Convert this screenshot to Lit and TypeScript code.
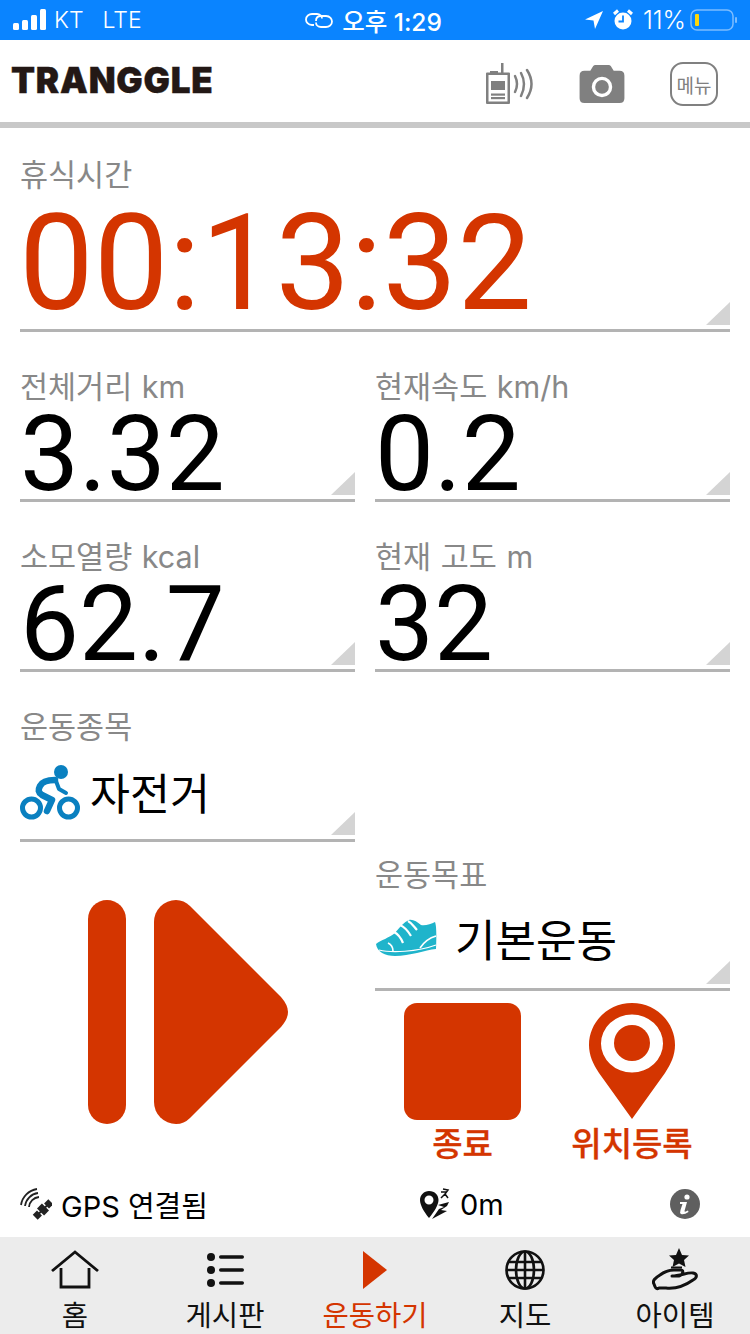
import { LitElement, html, css } from "lit";
import { customElement } from "lit/decorators.js";

const ORANGE = "#d43500";

const cyclist = html`<svg viewBox="0 0 60 56" width="60" height="56">
  <circle cx="41" cy="8" r="7" fill="#0a80c0"/>
  <path d="M35 16 C28 16 22 18 20 22 C18 26 18 28 22 31 L32 36 L27 47" fill="none" stroke="#0a80c0" stroke-width="6.500" stroke-linecap="round" stroke-linejoin="round"/>
  <path d="M36 17 L39 25 L46 29" fill="none" stroke="#0a80c0" stroke-width="4" stroke-linecap="round" stroke-linejoin="round"/>
  <circle cx="11.500" cy="44" r="9" fill="none" stroke="#0a80c0" stroke-width="5"/>
  <circle cx="48.500" cy="44" r="9" fill="none" stroke="#0a80c0" stroke-width="5"/>
</svg>`;

const shoe = html`<svg viewBox="0 0 62 38" width="62" height="38">
  <path d="M1 25 C6 21 14 19 20 14 C25 8 29 3 34 1 C38 0 42 3 46 6 C50 7 56 5 60 3 Q62 8 61 30 C50 31 35 37 20 37 C10 37 2 33 1 25Z" fill="#1fb4cb"/>
  <path d="M19 13 C23 15 26 19 28 24 M25 6 C30 8 33 12 36 17 M33 2 C37 4 39 8 42 11" stroke="#fff" stroke-width="2.200" fill="none"/>
  <path d="M13 24 C17 26 18 29 18 32 M45 29 C49 23 54 19 61 17" stroke="#fff" stroke-width="1.600" fill="none"/>
  <path d="M4 31 C16 34 42 33 61 26" stroke="#fff" stroke-width="1.200" fill="none"/>
</svg>`;

@customElement("app-root")
export class AppRoot extends LitElement {
  static styles = css`
    :host { display: block; width: 750px; height: 1334px; background: #fff; overflow: hidden;
      font-family: "Inter", "Noto Sans CJK KR", sans-serif; color: #000; }
    .page { display: flex; flex-direction: column; height: 1334px; }

    .status { height: 40px; background: #0a84ff; color: #fff; display: grid; grid-template-columns: 1fr auto 1fr;
      align-items: center; padding: 0 13px; box-sizing: border-box; flex: none; }
    .st-l, .st-r, .st-c { display: flex; align-items: center; }
    .st-l { font-weight: 300; font-size: 23px; }
    .kt { margin-left: -1px; }
    .lte { margin-left: 19px; }
    .st-c { gap: 9px; font-weight: 500; font-size: 24.500px; margin-left: -3px; }
    .st-r { justify-content: flex-end; font-weight: 300; font-size: 25px; margin-right: -1px; }
    .arrow { margin-right: 9px; }
    .alarm { margin-right: 10px; }
    .batt { margin-left: 4px; }

    .header { height: 82px; display: flex; align-items: center; padding: 0 32px 0 11px; border-bottom: 6px solid #c8c8c8; box-sizing: content-box; flex: none; }
    .logo { font-weight: 900; font-size: 35px; color: #231815; letter-spacing: 0.800px; line-height: 1; flex: 1; margin-top: -1px; -webkit-text-stroke: 0.400px #231815; }
    .hicons { display: flex; align-items: center; gap: 45px; margin-top: 6px; }
    .menu { width: 48px; height: 44px; box-sizing: border-box; border: 2px solid #808080; border-radius: 13px; display: flex; align-items: center; justify-content: center; font-size: 19px; color: #808080; font-family: "Noto Sans CJK KR", sans-serif; white-space: nowrap; }

    .main { flex: 1; display: flex; flex-direction: column; padding: 0 20px; min-height: 0; }
    .label { font-size: 30.500px; word-spacing: 1px; line-height: 36px; color: #888; white-space: nowrap; }
    .cell { position: relative; border-bottom: 3px solid #b3b3b3; box-sizing: border-box; }
    .cell::after { content: ""; position: absolute; right: 0; bottom: 4px; width: 0; height: 0;
      border-style: solid; border-width: 0 0 23px 24px; border-color: transparent transparent #d4d4d4 transparent; }
    .timecell { height: 178px; margin-top: 26px; margin-bottom: 27px; padding-top: 3px; }
    .time { font-family: "Roboto", sans-serif; font-size: 133px; line-height: 116px; color: #d43500; margin: 13px 0 0 -1px; white-space: nowrap; }
    .grid { display: grid; grid-template-columns: 335px 355px; column-gap: 20px; row-gap: 27px; }
    .metric { height: 143px; padding-top: 10px; }
    .val { font-family: "Roboto", sans-serif; font-size: 105px; line-height: 84px; white-space: nowrap; margin-top: 8px; }

    .lower { display: grid; grid-template-columns: 335px 355px; column-gap: 20px; margin-top: 27px; }
    .sport { height: 143px; padding-top: 10px; }
    .sel { display: flex; align-items: center; font-size: 43.500px; line-height: 56px; font-family: "Noto Sans CJK KR", sans-serif; }
    .sport .sel { margin-top: 19px; gap: 10px; }
    .goalwrap { display: flex; flex-direction: column; padding-top: 148px; }
    .goal { height: 144px; padding-top: 10px; }
    .goal .sel { margin-top: 17px; gap: 18px; font-size: 44px; }
    .play { display: flex; padding: 58px 0 0 68px; }
    .acts { display: grid; grid-template-columns: 175px 164px; margin-top: 12px; }
    .act { display: flex; flex-direction: column; align-items: center; color: #d43500; font-size: 33px; font-weight: 500; -webkit-text-stroke: 0.300px #d43500; line-height: 40px; font-family: "Noto Sans CJK KR", sans-serif; white-space: nowrap; }
    .stop { width: 117px; height: 117px; border-radius: 13px; background: #d43500; margin-bottom: 2px; }
    .act svg { display: block; margin-bottom: 2px; }

    .info { height: 64px; display: grid; grid-template-columns: 400px 1fr auto; align-items: center; padding: 0 50px 2px 20px; font-size: 29px; box-sizing: border-box; flex: none; }
    .info > div { display: flex; align-items: center; gap: 9px; }

    .tabs { height: 97px; background: #ececec; display: grid; grid-template-columns: repeat(5, 150px); box-sizing: border-box; flex: none; }
    .tab { display: flex; flex-direction: column; align-items: center; font-size: 28.600px; line-height: 32px; font-family: "Noto Sans CJK KR", sans-serif; color: #111; }
    .ic { height: 61px; display: flex; align-items: center; justify-content: center; padding-top: 4px; box-sizing: border-box; }
    .tab.on { color: #d43500; }
  `;

  render() {
    return html`<div class="page">
      <div class="status">
        <div class="st-l">
          <svg width="42" height="22" viewBox="0 0 42 22"><g fill="#fff"><rect x="0" y="14" width="6" height="7" rx="1.500"/><rect x="9" y="11" width="6" height="10" rx="1.500"/><rect x="18" y="6" width="6" height="15" rx="1.500"/><rect x="27" y="0" width="6" height="21" rx="1.500"/></g></svg>
          <span class="kt">KT</span><span class="lte">LTE</span>
        </div>
        <div class="st-c">
          <svg width="28" height="16" viewBox="0 0 28 16" fill="none" stroke="#fff" stroke-width="1.800"><path d="M9 13 H7 C3 13 1 10 1 7.500 C1 4 4 2 7 2 H12 C15 2 17 4 17 6.500"/><path d="M11 9 C11 6 13 4 16 4 H21 C25 4 27 7 27 9.500 C27 13 24 15 21 15 H16 C13 15 11 13 11 10.500"/></svg>
          <span>오후 1:29</span>
        </div>
        <div class="st-r">
          <svg class="arrow" width="20" height="20" viewBox="0 0 20 20"><path d="M19 1 L1 9.500 L9.500 10.500 L11 19Z" fill="#fff"/></svg>
          <svg class="alarm" width="20" height="22" viewBox="0 0 20 22"><circle cx="10" cy="12" r="8.500" fill="#fff"/><path d="M10 6.500 V12.500 H5.500" stroke="#0a84ff" stroke-width="1.800" fill="none"/><path d="M1 5 L5 1.500 M19 5 L15 1.500" stroke="#fff" stroke-width="3"/></svg>
          <span>11%</span>
          <svg class="batt" width="48" height="24" viewBox="0 0 48 24"><rect x="1" y="2" width="42" height="20" rx="6" fill="none" stroke="#7cbcff" stroke-width="1.500"/><rect x="5" y="6" width="4" height="12" rx="1" fill="#ffd60a"/><rect x="45" y="9" width="2" height="6" rx="1" fill="#7cbcff"/></svg>
        </div>
      </div>

      <div class="header">
        <div class="logo">TRANGGLE</div>
        <div class="hicons">
          <svg width="48" height="42" viewBox="0 0 48 42">
            <g fill="#808080"><rect x="15" y="0" width="2.500" height="10"/><rect x="4" y="8" width="8" height="2.500"/><path fill-rule="evenodd" d="M1 9.500 H23 Q24 9.500 24 10.500 V40 Q24 41 23 41 H1 Q0 41 0 40 V10.500 Q0 9.500 1 9.500Z M2.500 12 V38.500 H21.500 V12Z"/><rect x="5" y="18" width="14" height="9"/><rect x="5" y="30.500" width="14" height="2.200"/><rect x="5" y="34" width="14" height="2.200"/></g>
            <g fill="none" stroke="#808080" stroke-width="2.500" stroke-linecap="round"><path d="M29 13 Q33 21 29 29"/><path d="M35 10 Q41 21 35 33"/><path d="M41 7 Q50 21 41 35"/></g>
          </svg>
          <svg width="46" height="38" viewBox="0 0 46 39">
            <path fill-rule="evenodd" fill="#808080" d="M5 6 H11 L14 1 Q15 0 16 0 H30 Q31 0 32 1 L35 6 H41 Q46 6 46 11 V34 Q46 39 41 39 H5 Q0 39 0 34 V11 Q0 6 5 6Z M23 12 A10.500 10.500 0 1 0 23 33 A10.500 10.500 0 1 0 23 12Z"/>
            <circle cx="23" cy="22.500" r="7" fill="#808080"/>
          </svg>
          <div class="menu">메뉴</div>
        </div>
      </div>

      <div class="main">
        <div class="cell timecell">
          <div class="label">휴식시간</div>
          <div class="time">00:13:32</div>
        </div>
        <div class="grid">
          <div class="cell metric"><div class="label">전체거리 km</div><div class="val">3.32</div></div>
          <div class="cell metric"><div class="label">현재속도 km/h</div><div class="val">0.2</div></div>
          <div class="cell metric"><div class="label">소모열량 kcal</div><div class="val">62.7</div></div>
          <div class="cell metric"><div class="label">현재 고도 m</div><div class="val">32</div></div>
        </div>
        <div class="lower">
          <div>
            <div class="cell sport"><div class="label">운동종목</div><div class="sel">${cyclist}<span>자전거</span></div></div>
            <div class="play">
              <svg width="200" height="224" viewBox="0 0 200 224"><rect x="0" y="0" width="38" height="224" rx="19" fill="${ORANGE}"/><path d="M66 22 A22 22 0 0 1 88 0 Q96 0 102 6 L193 97 Q200 105 200 112 Q200 119 193 127 L102 218 Q96 224 88 224 A22 22 0 0 1 66 202Z" fill="${ORANGE}"/></svg>
            </div>
          </div>
          <div class="goalwrap">
            <div class="cell goal"><div class="label">운동목표</div><div class="sel">${shoe}<span>기본운동</span></div></div>
            <div class="acts">
              <div class="act"><div class="stop"></div><span>종료</span></div>
              <div class="act">
                <svg width="86" height="117" viewBox="0 0 86 117"><path fill-rule="evenodd" fill="${ORANGE}" d="M43 0 C67 0 86 19 86 42 C86 52 82 61 76 70 L43 116 L10 70 C4 61 0 52 0 42 C0 19 19 0 43 0Z M43 11.500 A31 29 0 1 0 43 69.500 A31 29 0 1 0 43 11.500Z"/><circle cx="43" cy="40" r="18" fill="${ORANGE}"/></svg>
                <span>위치등록</span>
              </div>
            </div>
          </div>
        </div>
      </div>

      <div class="info">
        <div>
          <svg width="32" height="32" viewBox="0 0 32 32"><g fill="none" stroke="#222" stroke-width="1.800"><path d="M1 17 A19 19 0 0 1 17 1"/><path d="M5 18 A15 15 0 0 1 18 5"/><path d="M9 19 A11 11 0 0 1 19 9"/></g><g fill="#222" transform="rotate(-45 23 21.500)"><rect x="12" y="18" width="6" height="7"/><rect x="28" y="18" width="6" height="7"/><rect x="19.500" y="16.500" width="7" height="10"/><rect x="17" y="20.500" width="12" height="2"/></g></svg>
          <span>GPS 연결됨</span>
        </div>
        <div>
          <svg width="31" height="32" viewBox="0 0 31 32"><path fill-rule="evenodd" fill="#111" d="M9 3 C15 3 18.500 7 18.500 12 C18.500 17 14 24 9 30 C4 24 0 17 0 12 C0 7 4 3 9 3Z M9 7.500 A4.500 4.500 0 1 0 9 16.500 A4.500 4.500 0 1 0 9 7.500Z"/><path d="M12 31 L19 21 L24 19 L18 17 L29 14 L27 18 L21 22 L27 23Z" fill="#111"/><path d="M23 1 L28 2 L25 6 L28 10 M21 4 L26 4 M25 6 L21 10" stroke="#111" stroke-width="1.500" fill="none"/></svg>
          <span>0m</span>
        </div>
        <svg width="30" height="30" viewBox="0 0 30 30"><circle cx="15" cy="15" r="15" fill="#5f5f5f"/><circle cx="17" cy="8" r="2.600" fill="#fff"/><path d="M10 13 H17 L14.500 22 Q14.500 23.500 18 21.500 L18.500 23 Q14 26 11 25 Q9.500 24 10.500 21 L12.500 15 L10 15Z" fill="#fff"/></svg>
      </div>

      <div class="tabs">
        <div class="tab"><div class="ic"><svg width="48" height="40" viewBox="0 0 48 40" fill="none" stroke="#111" stroke-width="2.800"><path d="M1 21 L24 2 L47 21"/><path d="M10 18 V37 H38 V18"/></svg></div><span>홈</span></div>
        <div class="tab"><div class="ic"><svg width="38" height="34" viewBox="0 0 38 34"><g fill="#111"><circle cx="5" cy="4" r="4"/><circle cx="5" cy="17" r="4"/><circle cx="5" cy="30" r="4"/><rect x="13" y="2.300" width="25" height="3.500" rx="1.700"/><rect x="13" y="15.300" width="25" height="3.500" rx="1.700"/><rect x="13" y="28.300" width="25" height="3.500" rx="1.700"/></g></svg></div><span>게시판</span></div>
        <div class="tab on"><div class="ic"><svg width="26" height="38" viewBox="0 0 26 38"><path d="M1 0 L25 19 L1 38Z" fill="${ORANGE}"/></svg></div><span>운동하기</span></div>
        <div class="tab"><div class="ic"><svg width="40" height="40" viewBox="0 0 40 40" fill="none" stroke="#111" stroke-width="2.600"><circle cx="20" cy="20" r="18.500"/><ellipse cx="20" cy="20" rx="9" ry="18.500"/><path d="M20 1.500 V38.500 M3 12 H37 M3 28 H37 M1.500 20 H38.500"/></svg></div><span>지도</span></div>
        <div class="tab"><div class="ic"><svg width="46" height="44" viewBox="0 0 46 44"><path d="M27 0 L30 7 L37 7.500 L32 12 L33.500 19 L27 15.500 L20.500 19 L22 12 L17 7.500 L24 7 Z" fill="#111"/><path d="M19 19.500 H30" stroke="#111" stroke-width="2"/><path d="M2 36 C0 33 3 30 8 27 C12 24 16 22 22 22 H29 C32 22 31 27 27 28 H20 C28 28 36 24 41 25 C46 26 45 30 41 32 C34 37 24 41 14 40 H7 C4 42 3 39 2 36 Z" fill="none" stroke="#111" stroke-width="3" stroke-linejoin="round"/></svg></div><span>아이템</span></div>
      </div>
    </div>`;
  }
}
